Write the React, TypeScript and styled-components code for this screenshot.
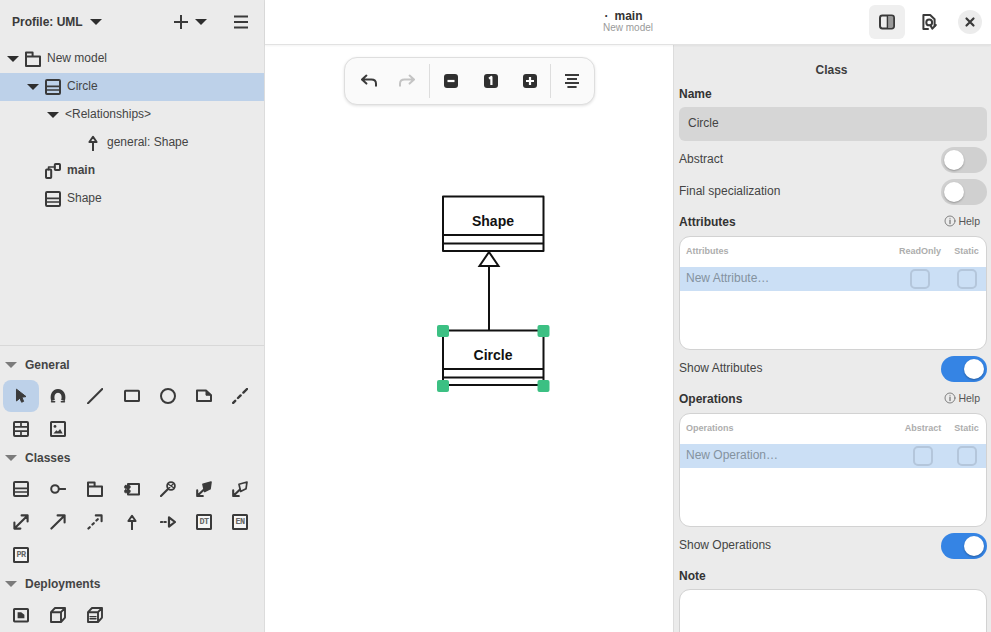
import * as React from "react";
import { FC, ReactNode } from "react";
import styled, { createGlobalStyle } from "styled-components";

const GlobalStyle = createGlobalStyle`
  html, body {
    margin: 0;
    height: 100%;
    overflow: hidden;
    background: #fff;
    font-family: "Liberation Sans", Arial, sans-serif;
    color: #3d3d3d;
  }
`;

const Shell = styled.div`
  display: flex;
  width: 100vw;
  height: 100vh;
  overflow: hidden;
`;

/* left column */
const Sidebar = styled.aside`
  flex: 0 0 265px;
  box-sizing: border-box;
  display: flex;
  flex-direction: column;
  background: #ebebeb;
  border-right: 1px solid #dcdcdc;
  overflow: hidden;
`;

const SideHeader = styled.div`
  flex: 0 0 45px;
  box-sizing: border-box;
  display: flex;
  align-items: center;
  padding: 0 15px 2px 12px;
`;

const ProfileLabel = styled.span`
  font-size: 12px;
  font-weight: 700;
  color: #3a3a3a;
  margin-right: 7px;
`;

const Caret = styled.span<{ $muted?: boolean }>`
  display: inline-block;
  width: 0;
  height: 0;
  border-left: 6px solid transparent;
  border-right: 6px solid transparent;
  border-top: 6px solid ${(p) => (p.$muted ? "#7b7b7b" : "#2e2e2e")};
`;

const AddGroup = styled.div`
  margin-left: auto;
  display: flex;
  align-items: center;
  gap: 6px;
  margin-right: 26px;
`;

const Tree = styled.div`
  flex: 0 0 300px;
`;

const TreeRow = styled.div<{ $depth: number; $selected?: boolean }>`
  height: 28px;
  display: flex;
  align-items: center;
  padding-left: ${(p) => 5 + p.$depth * 20}px;
  background: ${(p) => (p.$selected ? "#bdd1e9" : "transparent")};
`;

const CaretSlot = styled.span`
  flex: 0 0 15px;
  display: flex;
  justify-content: center;
  margin-right: 5px;
`;

const TreeLabel = styled.span<{ $bold?: boolean }>`
  font-size: 12px;
  margin-left: 6px;
  margin-top: -2px;
  font-weight: ${(p) => (p.$bold ? 700 : 400)};
  color: #444;
`;

const PlainLabel = styled(TreeLabel)`
  margin-left: 0;
`;

const Palette = styled.div`
  flex: 1;
  border-top: 1px solid #d8d8d8;
  padding-top: 7px;
`;

const PaletteHead = styled.div`
  height: 25px;
  box-sizing: border-box;
  padding: 0 0 2px 5px;
  margin-bottom: 2px;
  display: flex;
  align-items: center;
  gap: 8px;
  font-size: 12px;
  font-weight: 700;
  color: #444;
`;

const ToolGrid = styled.div`
  display: grid;
  grid-template-columns: 37px 37px 37px 36px 36px 36px 36px;
  grid-auto-rows: 33px;
  padding-left: 3px;
`;

const Tool = styled.div<{ $active?: boolean }>`
  display: flex;
  align-items: center;
  justify-content: center;
  width: 36px;
  height: 32px;
  border-radius: 8px;
  background: ${(p) => (p.$active ? "#bdd1e9" : "transparent")};
`;

const TextTool = styled.div`
  box-sizing: border-box;
  width: 16px;
  height: 16px;
  border: 2px solid #3a3a3a;
  border-radius: 1.5px;
  background: #f6f6f6;
  display: flex;
  align-items: center;
  justify-content: center;
  font-family: "Liberation Mono", monospace;
  font-weight: 700;
  font-size: 8.5px;
  letter-spacing: -0.6px;
  color: #666;
`;

/* centre and right */
const Main = styled.div`
  flex: 1;
  min-width: 0;
  display: flex;
  flex-direction: column;
`;

const TopBar = styled.header`
  flex: 0 0 45px;
  box-sizing: border-box;
  display: grid;
  grid-template-columns: 1fr auto 1fr;
  align-items: center;
  background: #fff;
  border-bottom: 1px solid #e2e2e2;
  box-shadow: 0 1px 2px rgba(0, 0, 0, 0.05);
  position: relative;
  z-index: 2;
`;

const TitleBlock = styled.div`
  grid-column: 2;
  text-align: center;
  margin-top: -1px;
`;

const TitleLine = styled.div`
  font-size: 12px;
  font-weight: 700;
  line-height: 13px;
  color: #333;
  padding-right: 9px;
`;

const TitleDot = styled.span`
  font-weight: 700;
  margin-right: 6px;
`;

const SubTitle = styled.div`
  font-size: 10px;
  line-height: 10px;
  color: #9a9a9a;
`;

const Actions = styled.div`
  grid-column: 3;
  display: flex;
  justify-content: flex-end;
  align-items: center;
  gap: 6px;
  padding-right: 9px;
`;

const HeadButton = styled.div<{ $active?: boolean }>`
  width: 36px;
  height: 34px;
  border-radius: 6px;
  display: flex;
  align-items: center;
  justify-content: center;
  background: ${(p) => (p.$active ? "#efefef" : "transparent")};
`;

const CloseButton = styled.div`
  width: 24px;
  height: 24px;
  margin-left: 5px;
  border-radius: 50%;
  background: #ececec;
  display: flex;
  align-items: center;
  justify-content: center;
`;

const Body = styled.div`
  flex: 1;
  min-height: 0;
  display: flex;
`;

const Canvas = styled.main`
  flex: 1;
  position: relative;
  background: #fff;
`;

const Diagram = styled.svg`
  position: absolute;
  inset: 0;
  width: 100%;
  height: 100%;
`;

const FloatBar = styled.div`
  position: absolute;
  left: 79px;
  top: 12px;
  box-sizing: border-box;
  width: 251px;
  height: 48px;
  display: flex;
  align-items: center;
  background: #fafafa;
  border: 1px solid #dedede;
  border-radius: 13px;
  box-shadow: 0 1px 3px rgba(0, 0, 0, 0.12);
`;

const BarButton = styled.div<{ $w: number; $after?: number }>`
  width: ${(p) => p.$w}px;
  margin-right: ${(p) => p.$after ?? 0}px;
  display: flex;
  justify-content: center;
  align-items: center;
`;

const BarDivider = styled.div`
  width: 1px;
  height: 34px;
  background: #dddddd;
`;

const Panel = styled.aside`
  flex: 0 0 318px;
  box-sizing: border-box;
  padding: 16px 4px 0 5px;
  background: #ebebeb;
  border-left: 1px solid #dcdcdc;
  overflow: hidden;
`;

const PanelTitle = styled.div`
  height: 18px;
  line-height: 18px;
  padding-right: 3px;
  text-align: center;
  font-size: 12px;
  font-weight: 700;
  color: #3d3d3d;
`;

const SectionHead = styled.div<{ $after?: number }>`
  height: 20px;
  margin-top: 5px;
  margin-bottom: ${(p) => p.$after ?? 3}px;
  display: flex;
  align-items: center;
  justify-content: space-between;
  font-size: 12px;
  font-weight: 700;
  color: #333;
`;

const HelpLink = styled.span`
  display: flex;
  align-items: center;
  gap: 2px;
  font-size: 10.5px;
  font-weight: 400;
  color: #555;
  margin-right: 7px;
  margin-top: -2px;
`;

const NameInput = styled.div`
  height: 34px;
  box-sizing: border-box;
  padding: 0 0 2px 9px;
  display: flex;
  align-items: center;
  border-radius: 6px;
  background: #d6d6d6;
  font-size: 12px;
  color: #444;
`;

const ToggleRow = styled.div<{ $top?: number }>`
  height: 32px;
  margin-top: ${(p) => p.$top ?? 0}px;
  display: flex;
  align-items: center;
  justify-content: space-between;
  font-size: 12px;
  color: #444;
`;

const Switch = styled.div<{ $on?: boolean }>`
  position: relative;
  width: 46px;
  height: 26px;
  margin-top: 1px;
  border-radius: 13px;
  background: ${(p) => (p.$on ? "#3584e4" : "#d0d0d0")};

  &::after {
    content: "";
    position: absolute;
    top: 3px;
    left: ${(p) => (p.$on ? "23px" : "3px")};
    width: 20px;
    height: 20px;
    border-radius: 50%;
    background: #fff;
    box-shadow: 0 1px 2px rgba(0, 0, 0, 0.3);
  }
`;

const ListBox = styled.div`
  box-sizing: border-box;
  height: 114px;
  background: #fff;
  border: 1px solid #d2d2d2;
  border-radius: 11px;
  overflow: hidden;
`;

const NoteBox = styled(ListBox)`
  height: 80px;
`;

const ListHead = styled.div<{ $col: number }>`
  height: 30px;
  padding-left: 6px;
  display: grid;
  grid-template-columns: 1fr ${(p) => p.$col}px 39px;
  align-items: center;
  justify-items: center;
  font-size: 9px;
  font-weight: 700;
  color: #adadad;

  & > span {
    margin-top: -2px;
  }

  & > :first-child {
    justify-self: start;
  }
`;

const ListRow = styled(ListHead)`
  height: 24px;
  background: #cbdff5;
  font-size: 12px;
  font-weight: 400;
  color: #84929f;
`;

const Check = styled.div`
  box-sizing: border-box;
  width: 20px;
  height: 20px;
  border: 2px solid #b4c6db;
  border-radius: 5px;
`;

const IconSvg = styled.svg<{ $size?: number }>`
  width: ${(p) => p.$size ?? 16}px;
  height: ${(p) => p.$size ?? 16}px;
  flex: none;
  fill: none;
  stroke: #3a3a3a;
  stroke-width: 2;
  stroke-linecap: round;
  stroke-linejoin: round;
  display: block;
`;

const Ico: FC<{ children: ReactNode; size?: number; view?: string }> = ({
  children,
  size,
  view = "0 0 16 16",
}) => (
  <IconSvg $size={size} viewBox={view}>
    {children}
  </IconSvg>
);

const dark = "#3a3a3a";

const ClassIcon = () => (
  <Ico>
    <rect x="1" y="1" width="14" height="14" rx="1" />
    <path d="M1 7.4h14M1 11h14" strokeWidth="1.6" strokeLinecap="butt" />
  </Ico>
);
const FolderIcon = () => (
  <Ico>
    <path d="M1 5.6V15h14V5.6H1M1 5.6V1.4h6.6v4.2" />
  </Ico>
);
const DiagramIcon = () => (
  <Ico>
    <rect x="1" y="6.6" width="5.2" height="8.4" rx="0.8" />
    <rect x="9.8" y="1" width="5.2" height="6" rx="0.8" />
    <path d="M3.6 6.6V4h6.2" strokeWidth="1.7" />
  </Ico>
);
const GeneralizationIcon = () => (
  <Ico>
    <path d="M8 15.4V7" />
    <path d="M8 1.8L11.6 7H4.4z" />
  </Ico>
);

const PointerIcon = () => (
  <Ico>
    <path
      d="M3.8 1.4L13 8.6L8.9 9.2L10.6 13.4L8.6 14.2L6.9 10.2L3.8 12.7z"
      fill={dark}
      strokeWidth="1"
    />
  </Ico>
);
const ContainmentIcon = () => (
  <Ico>
    <path d="M3 12.5C1.5 7 3.8 2.8 8 2.8s6.5 4.2 5 9.7" strokeWidth="3.8" strokeLinecap="butt" />
    <path d="M1.6 13.8h3M11.4 13.8h3" strokeWidth="1.6" />
  </Ico>
);
const LineIcon = () => (
  <Ico>
    <path d="M1 15.2L15.2 1" />
  </Ico>
);
const RectIcon = () => (
  <Ico>
    <rect x="1" y="2.8" width="14" height="10.2" rx="0.6" />
  </Ico>
);
const CircleIcon = () => (
  <Ico>
    <circle cx="8" cy="8" r="7" />
  </Ico>
);
const NoteIcon = () => (
  <Ico>
    <path d="M1 2.6h9l5 4.6V13H1z" />
    <path d="M10 2.6v4.6h5z" fill={dark} strokeWidth="1" />
  </Ico>
);
const DashedLineIcon = () => (
  <Ico>
    <path d="M1.2 14.8L3.2 12.8M6 10L8.6 7.4M11.4 4.6L15 1" strokeWidth="2.4" />
  </Ico>
);
const TableIcon = () => (
  <Ico>
    <rect x="1" y="1" width="14" height="14" rx="1" />
    <path d="M1 5.8h14M1 10.2h14M8 1v4.8M8 10.2V15" strokeWidth="1.7" strokeLinecap="butt" />
  </Ico>
);
const ImageIcon = () => (
  <Ico>
    <rect x="1" y="1" width="14" height="14" rx="0.6" />
    <circle cx="5" cy="5.4" r="1.4" fill={dark} stroke="none" />
    <path d="M3.4 12.4l3-3.2 1.5 1.4 2.2-2.6 2.6 4.4z" fill={dark} stroke="none" />
  </Ico>
);
const InterfaceIcon = () => (
  <Ico>
    <circle cx="5" cy="8" r="3.8" />
    <path d="M9 8h6.4" />
  </Ico>
);
const ComponentIcon = () => (
  <Ico>
    <path d="M4 3h11v10.4H4z" />
    <rect x="0.6" y="4.4" width="5.6" height="3" rx="1" fill={dark} strokeWidth="0.8" />
    <rect x="0.6" y="8.8" width="5.6" height="3" rx="1" fill={dark} strokeWidth="0.8" />
  </Ico>
);
const ActorLinkIcon = () => (
  <Ico>
    <circle cx="11" cy="5" r="3.9" strokeWidth="1.8" />
    <path d="M8.4 3.2l5.2 3.6M13.4 2.8L8.6 7.2" strokeWidth="1.2" />
    <path d="M8 8L1 15" strokeWidth="2.2" />
  </Ico>
);
const AggregationIcon: FC<{ filled?: boolean }> = ({ filled }) => (
  <Ico>
    <path d="M7 3.2L15 1 14 7.8 8.6 10.4z" fill={filled ? dark : "none"} strokeWidth="1.7" />
    <path d="M8 8.4L1.2 15M1.2 9.4V15h5.6" strokeWidth="2.1" />
  </Ico>
);
const BiArrowIcon = () => (
  <Ico>
    <path d="M1.4 14.6L14.6 1.4M8.6 1.4h6v6M1.4 8.6v6h6" strokeWidth="2.1" />
  </Ico>
);
const ArrowIcon = () => (
  <Ico>
    <path d="M1.4 14.6L14.6 1.4M7.6 1.4h7v7" strokeWidth="2.1" />
  </Ico>
);
const DashedArrowIcon = () => (
  <Ico>
    <path d="M1.4 14.6l1.4-1.4M5.4 10.6l1.4-1.4M9.4 6.6l1.4-1.4M8.8 1.4h5.8v5.8" strokeWidth="2.1" />
  </Ico>
);
const RealizationIcon = () => (
  <Ico>
    <path d="M1 8h1.2M4.4 8h1.4" strokeWidth="2.2" />
    <path d="M9 3.4L15 8l-6 4.6z" strokeWidth="2.2" />
  </Ico>
);
const ArtifactIcon = () => (
  <Ico>
    <rect x="1" y="2" width="14" height="12.4" rx="0.6" />
    <path d="M4.6 5.2h3.6l3.2 2.6v3.4H4.6z" fill={dark} stroke="none" />
  </Ico>
);
const NodeIcon = () => (
  <Ico>
    <path d="M1 5.2h10V15H1zM1 5.2L5 1h10v9.6L11 15M11 5.2L15 1" strokeWidth="1.9" />
  </Ico>
);
const NodeInstanceIcon = () => (
  <Ico>
    <path d="M1 5.2h10V15H1zM1 5.2L5 1h10v9.6L11 15M11 5.2L15 1" strokeWidth="1.9" />
    <path d="M3 9.6h6M3 11.8h6" strokeWidth="1.4" />
  </Ico>
);

const PlusIcon = () => (
  <Ico>
    <path d="M8 1v14M1 8h14" strokeLinecap="butt" />
  </Ico>
);
const MenuIcon = () => (
  <Ico>
    <path d="M1 2.5h14M1 8h14M1 13.5h14" strokeLinecap="butt" />
  </Ico>
);
const UndoIcon: FC<{ muted?: boolean }> = ({ muted }) => (
  <IconSvg viewBox="0 0 16 16" style={muted ? { stroke: "#c4c4c4", transform: "scaleX(-1)" } : undefined}>
    <path d="M5.4 2.6L1 6.6l4.4 4M1.4 6.6h9c3 0 4.6 1.8 4.6 4.2v2" />
  </IconSvg>
);
const SquareGlyph: FC<{ children: ReactNode }> = ({ children }) => (
  <Ico>
    <rect x="1" y="1" width="14" height="14" rx="3" fill="#303030" stroke="none" />
    {children}
  </Ico>
);
const AlignIcon = () => (
  <Ico>
    <path d="M1 2h14M3 6h10M1 10h14M3.4 14h9.2" strokeLinecap="butt" />
  </Ico>
);
const PanelIcon = () => (
  <Ico>
    <rect x="1" y="1.6" width="14" height="12.8" rx="2.4" />
    <rect x="8.6" y="2.4" width="5.6" height="11.2" rx="1" fill="#9a9a9a" stroke="none" />
    <path d="M8.4 2v12" strokeWidth="1.4" />
  </Ico>
);
const ValidateIcon = () => (
  <Ico>
    <path d="M7 15H2.4V1h6.8L13.6 5.2V12" />
    <circle cx="8.2" cy="8.4" r="2.9" />
    <path d="M9.4 11.4L11.4 14.6L14.8 11" />
  </Ico>
);
const CloseIcon = () => (
  <Ico size={12} view="0 0 12 12">
    <path d="M2.5 2.5l7 7M9.5 2.5l-7 7" strokeWidth="2.2" />
  </Ico>
);
const InfoIcon = () => (
  <IconSvg $size={12} viewBox="0 0 12 12" style={{ stroke: "#666", strokeWidth: 0.8 }}>
    <circle cx="6" cy="6" r="5" />
    <path d="M6 5v3.6" strokeWidth="1.1" />
    <circle cx="6" cy="3.2" r="0.5" fill="#666" stroke="none" />
  </IconSvg>
);

const generalTools = [
  <PointerIcon />,
  <ContainmentIcon />,
  <LineIcon />,
  <RectIcon />,
  <CircleIcon />,
  <NoteIcon />,
  <DashedLineIcon />,
  <TableIcon />,
  <ImageIcon />,
];

const classTools = [
  <ClassIcon />,
  <InterfaceIcon />,
  <FolderIcon />,
  <ComponentIcon />,
  <ActorLinkIcon />,
  <AggregationIcon filled />,
  <AggregationIcon />,
  <BiArrowIcon />,
  <ArrowIcon />,
  <DashedArrowIcon />,
  <GeneralizationIcon />,
  <RealizationIcon />,
  <TextTool>DT</TextTool>,
  <TextTool>EN</TextTool>,
  <TextTool>PR</TextTool>,
];

const deploymentTools = [<ArtifactIcon />, <NodeIcon />, <NodeInstanceIcon />];

const ToolSection: FC<{ title: string; tools: ReactNode[]; firstActive?: boolean }> = ({
  title,
  tools,
  firstActive,
}) => (
  <>
    <PaletteHead>
      <Caret $muted />
      {title}
    </PaletteHead>
    <ToolGrid>
      {tools.map((tool, i) => (
        <Tool key={i} $active={firstActive && i === 0}>
          {tool}
        </Tool>
      ))}
    </ToolGrid>
  </>
);

const UmlBox: FC<{ top: number; name: string }> = ({ top, name }) => (
  <g fill="none" stroke="#111" strokeWidth="2">
    <rect x="443" y={top} width="100.5" height="54.5" fill="#fff" strokeLinejoin="round" />
    <path d={`M443 ${top + 38.5}h100.5M443 ${top + 47}h100.5`} />
    <text
      x="493"
      y={top + 29}
      textAnchor="middle"
      fill="#111"
      stroke="none"
      fontFamily="'Liberation Sans', Arial, sans-serif"
      fontWeight="700"
      fontSize="14"
    >
      {name}
    </text>
  </g>
);

const App: FC = () => {
  return (
    <Shell>
      <GlobalStyle />
      <Sidebar>
        <SideHeader>
          <ProfileLabel>Profile: UML</ProfileLabel>
          <Caret />
          <AddGroup>
            <PlusIcon />
            <Caret />
          </AddGroup>
          <MenuIcon />
        </SideHeader>
        <Tree>
          <TreeRow $depth={0}>
            <CaretSlot><Caret /></CaretSlot>
            <FolderIcon />
            <TreeLabel>New model</TreeLabel>
          </TreeRow>
          <TreeRow $depth={1} $selected>
            <CaretSlot><Caret /></CaretSlot>
            <ClassIcon />
            <TreeLabel>Circle</TreeLabel>
          </TreeRow>
          <TreeRow $depth={2}>
            <CaretSlot><Caret /></CaretSlot>
            <PlainLabel>&lt;Relationships&gt;</PlainLabel>
          </TreeRow>
          <TreeRow $depth={3}>
            <CaretSlot />
            <GeneralizationIcon />
            <TreeLabel>general: Shape</TreeLabel>
          </TreeRow>
          <TreeRow $depth={1}>
            <CaretSlot />
            <DiagramIcon />
            <TreeLabel $bold>main</TreeLabel>
          </TreeRow>
          <TreeRow $depth={1}>
            <CaretSlot />
            <ClassIcon />
            <TreeLabel>Shape</TreeLabel>
          </TreeRow>
        </Tree>
        <Palette>
          <ToolSection title="General" tools={generalTools} firstActive />
          <ToolSection title="Classes" tools={classTools} />
          <ToolSection title="Deployments" tools={deploymentTools} />
        </Palette>
      </Sidebar>

      <Main>
        <TopBar>
          <TitleBlock>
            <TitleLine>
              <TitleDot>·</TitleDot>main
            </TitleLine>
            <SubTitle>New model</SubTitle>
          </TitleBlock>
          <Actions>
            <HeadButton $active><PanelIcon /></HeadButton>
            <HeadButton><ValidateIcon /></HeadButton>
            <CloseButton><CloseIcon /></CloseButton>
          </Actions>
        </TopBar>
        <Body>
          <Canvas>
            <Diagram viewBox="265 45 408 587" preserveAspectRatio="xMinYMin slice">
              <UmlBox top={196.5} name="Shape" />
              <UmlBox top={330.5} name="Circle" />
              <path d="M489 266v65" stroke="#111" strokeWidth="2" />
              <path d="M489 252L498.5 266H479.5z" fill="#fff" stroke="#111" strokeWidth="2" />
              <g fill="#3cc083">
                <rect x="437" y="325" width="12" height="12" rx="2" />
                <rect x="537.5" y="325" width="12" height="12" rx="2" />
                <rect x="437" y="380" width="12" height="12" rx="2" />
                <rect x="537.5" y="380" width="12" height="12" rx="2" />
              </g>
            </Diagram>
            <FloatBar>
              <BarButton $w={47}><UndoIcon /></BarButton>
              <BarButton $w={29} $after={8}><UndoIcon muted /></BarButton>
              <BarDivider />
              <BarButton $w={42}>
                <SquareGlyph>
                  <path d="M4.5 8h7" stroke="#fff" strokeWidth="2.2" strokeLinecap="butt" />
                </SquareGlyph>
              </BarButton>
              <BarButton $w={37}>
                <SquareGlyph>
                  <path d="M6 5.6L8.4 4v8" stroke="#fff" strokeWidth="2.2" strokeLinecap="butt" />
                </SquareGlyph>
              </BarButton>
              <BarButton $w={41}>
                <SquareGlyph>
                  <path d="M4 8h8M8 4v8" stroke="#fff" strokeWidth="2.2" strokeLinecap="butt" />
                </SquareGlyph>
              </BarButton>
              <BarDivider />
              <BarButton $w={41}><AlignIcon /></BarButton>
            </FloatBar>
          </Canvas>

          <Panel>
            <PanelTitle>Class</PanelTitle>
            <SectionHead>Name</SectionHead>
            <NameInput>Circle</NameInput>
            <ToggleRow $top={2}>
              Abstract
              <Switch />
            </ToggleRow>
            <ToggleRow>
              Final specialization
              <Switch />
            </ToggleRow>
            <SectionHead $after={4}>
              Attributes
              <HelpLink><InfoIcon />Help</HelpLink>
            </SectionHead>
            <ListBox>
              <ListHead $col={54}>
                <span>Attributes</span>
                <span>ReadOnly</span>
                <span>Static</span>
              </ListHead>
              <ListRow $col={54}>
                <span>New Attribute…</span>
                <Check />
                <Check />
              </ListRow>
            </ListBox>
            <ToggleRow $top={2}>
              Show Attributes
              <Switch $on />
            </ToggleRow>
            <SectionHead $after={4}>
              Operations
              <HelpLink><InfoIcon />Help</HelpLink>
            </SectionHead>
            <ListBox>
              <ListHead $col={48}>
                <span>Operations</span>
                <span>Abstract</span>
                <span>Static</span>
              </ListHead>
              <ListRow $col={48}>
                <span>New Operation…</span>
                <Check />
                <Check />
              </ListRow>
            </ListBox>
            <ToggleRow $top={2}>
              Show Operations
              <Switch $on />
            </ToggleRow>
            <SectionHead>Note</SectionHead>
            <NoteBox />
          </Panel>
        </Body>
      </Main>
    </Shell>
  );
};

export default App;
